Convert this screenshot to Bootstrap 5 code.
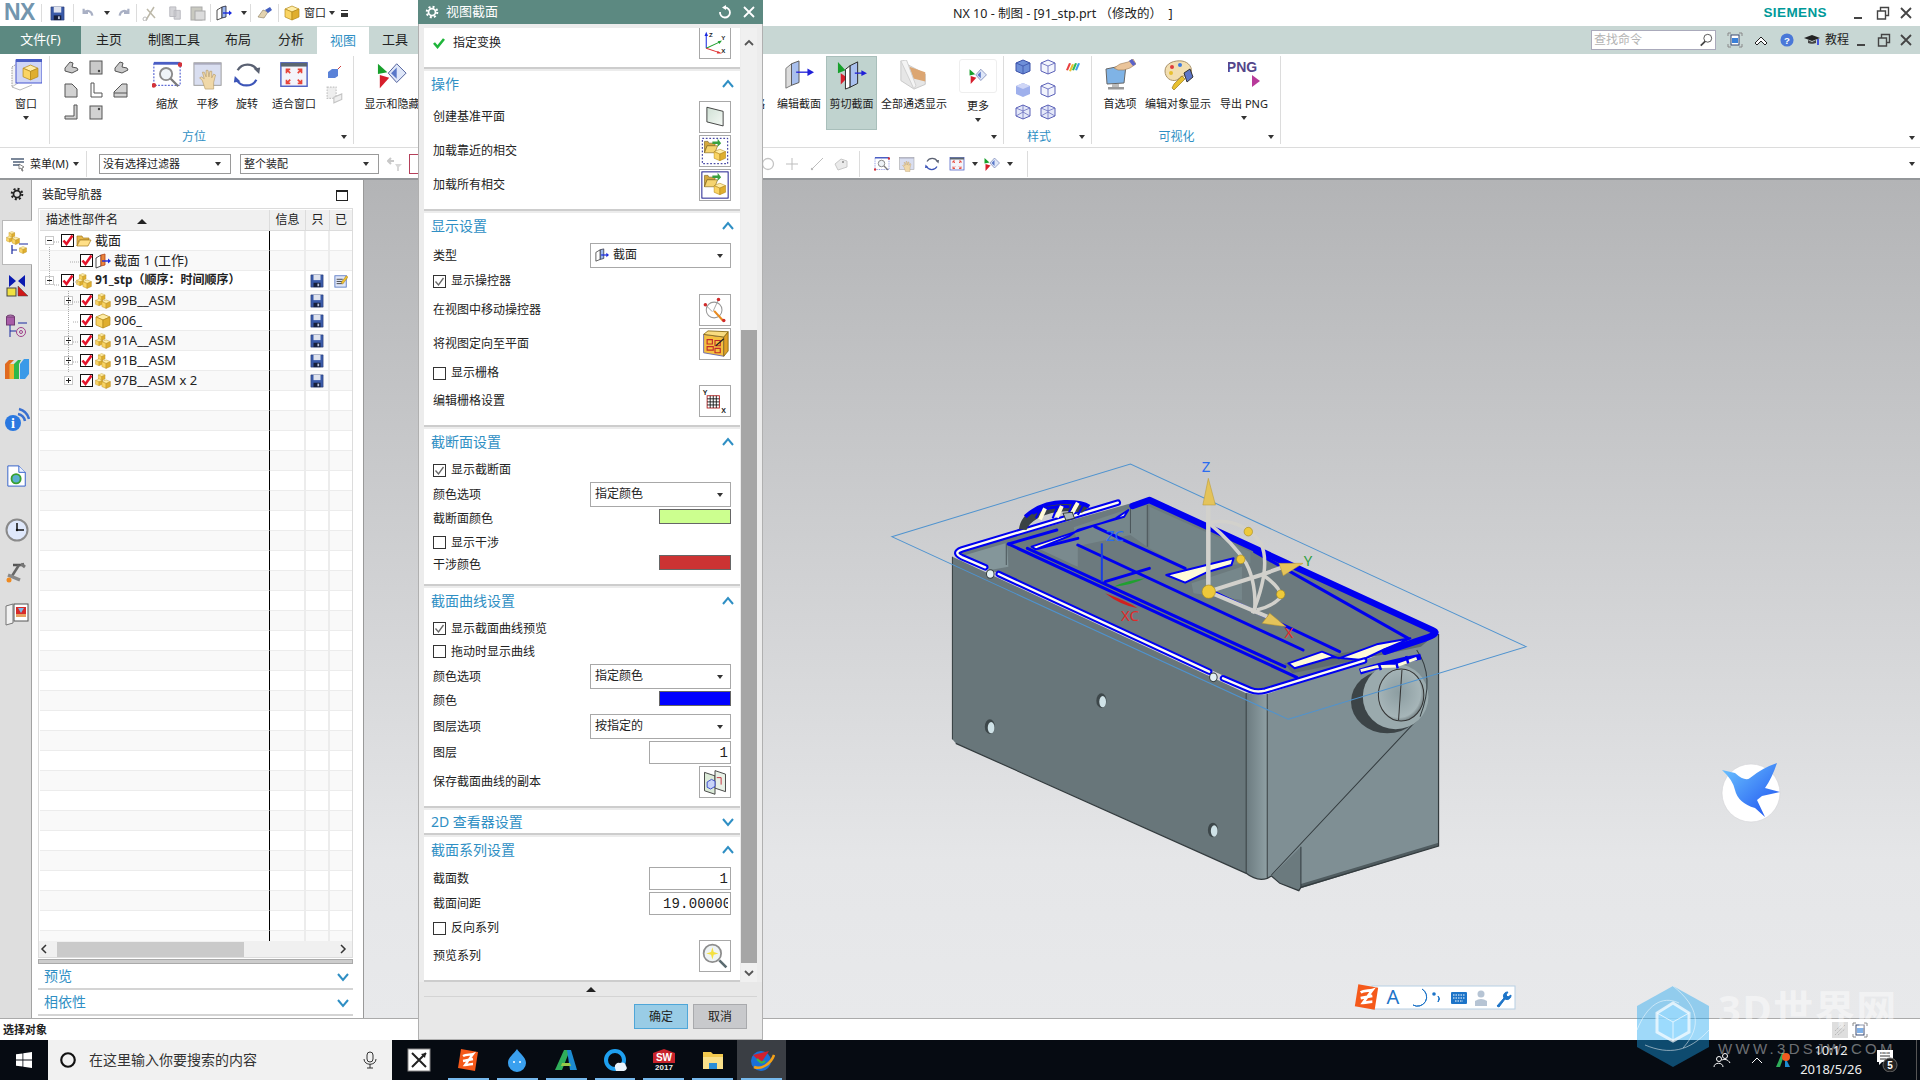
<!DOCTYPE html>
<html lang="zh-CN">
<head>
<meta charset="utf-8">
<title>NX 10 - 制图</title>
<link href="https://cdn.jsdelivr.net/npm/bootstrap@5.3.0/dist/css/bootstrap.min.css" rel="stylesheet">
<style>
html,body{margin:0;width:1920px;height:1080px;overflow:hidden;background:#fff}
body{font-family:"Noto Sans","Noto Sans CJK SC",sans-serif;font-size:12px;line-height:1.2;color:#222}
.sprite{position:absolute;width:0;height:0;overflow:hidden}
.app{position:relative;width:1920px;height:1080px;overflow:hidden}
.wd2{width:2px}.wd6{width:6px}.wd8{width:8px}.wd10{width:10px}.wd11{width:11px}.wd12{width:12px}.wd13{width:13px}.wd14{width:14px}.wd16{width:16px}.wd18{width:18px}.wd20{width:20px}.wd21{width:21px}.wd22{width:22px}.wd23{width:23px}.wd24{width:24px}.wd25{width:25px}.wd26{width:26px}.wd27{width:27px}.wd28{width:28px}.wd30{width:30px}.wd31{width:31px}.wd32{width:32px}.wd34{width:34px}.wd36{width:36px}.wd38{width:38px}.wd40{width:40px}.wd41{width:41px}.wd42{width:42px}.wd44{width:44px}.wd48{width:48px}.wd51{width:51px}.wd52{width:52px}.wd54{width:54px}.wd56{width:56px}.wd60{width:60px}.wd64{width:64px}.wd68{width:68px}.wd74{width:74px}.wd78{width:78px}.wd230{width:230px}.wd311{width:311px}.wd330{width:330px}
.slot{display:flex;align-items:center;justify-content:center;flex:none;height:100%}
.s10{width:10px;height:10px}.s12{width:12px;height:12px}.s13{width:13px;height:13px}.s14{width:14px;height:14px}.s15{width:15px;height:15px}.s16{width:16px;height:16px}.s18{width:18px;height:18px}.s20{width:20px;height:20px}.s22{width:22px;height:22px}.s24{width:24px;height:24px}.s26{width:26px;height:26px}.s28{width:28px;height:28px}.s30{width:30px;height:30px}.s32{width:32px;height:32px}
.car{display:inline-block;width:0;height:0;border-left:3.5px solid transparent;border-right:3.5px solid transparent;border-top:4px solid #333}
/* title */
.tbar{height:26px;background:#fff}
.nxlogo{font-family:"Liberation Sans",sans-serif;font-weight:700;font-size:23px;color:#7295ae;letter-spacing:-.5px;padding-left:4px;justify-content:flex-start}
.qsep{width:1px;height:18px;background:#dcdcdc;flex:none}
.ttl{margin-left:603px;font-size:12.5px;white-space:pre;color:#222}
.siemens{font-family:"Liberation Sans",sans-serif;font-weight:700;font-size:13.5px;letter-spacing:.4px;color:#009999}
.lbl11{font-size:11px}
.ovf{display:flex;flex-direction:column;align-items:center;gap:2px}
.ovf i{display:block;width:7px;height:1px;background:#333}
/* tabs */
.tabsrow{height:28px;background:#c8d7d4}
.tabsrow .nav-link{padding:0;height:28px;display:flex;align-items:center;justify-content:center;color:#222;font-size:13px}
.tabsrow .filetab{width:81px;background:#5c8981;color:#fff}
.tabsrow .acttab{background:#fff;color:#2f8fc4;border-top:1px solid #d4dedc}
.srch{width:125px;height:20px;margin-right:7px;background:#fff;border:1px solid #aab;display:flex;align-items:center;justify-content:space-between;padding:0 2px;color:#b3b3b3}
.tut{font-size:12px;color:#222;white-space:nowrap}
/* ribbon */
.ribbon{height:94px;background:#fff;border-bottom:1px solid #dcdcdc;padding-top:2px}
.rgrp{display:flex;flex-direction:column;flex:none;height:88px;border-right:1px solid #dcdcdc}
.rg1{width:50px;padding-left:4px}.rg2{width:304px;padding-left:8px}.rg3{width:650px;padding-left:8px}.rg4{width:88px;padding-left:6px}.rg5{width:189px;padding-left:4px}
.rtop{display:flex;height:75px}
.rbt{display:flex;flex-direction:column;align-items:center;padding-top:3px;flex:none;height:74px;white-space:nowrap;font-size:11px}
.rbt .ric{height:32px;display:flex;align-items:center;justify-content:center}
.rbt span{margin-top:5px;line-height:15px}
.rbt .car{margin-top:5px}
.rbt.on{background:#c0d3cf;border:1px solid #a9bfbb;padding-top:2px}
.morebox{width:38px;height:34px;border:1px solid #eee;border-radius:3px;display:flex;align-items:center;justify-content:center}
.rfoot{display:flex;align-items:center;height:14px;color:#2f8fc4;font-size:12px}
.rfoot b{font-weight:400;flex:1;text-align:center;padding-right:5px}
.rfoot div{width:18px;display:flex;justify-content:center}
.sgrid{display:grid;grid-template-columns:repeat(3,25px);grid-auto-rows:22.5px;justify-items:center;align-items:center}
.mr14{margin-right:14px}.ml3{margin-left:3px}.ml8{margin-left:8px}
.rcol{display:flex;flex-direction:column;align-items:center;padding-top:2px;gap:6px}
.fcar{height:88px}
/* toolbar */
.tool2{height:32px;background:#fff;border-bottom:2px solid #94979a;padding-top:1px}
.menuz{width:87px;height:26px;border-right:1px solid #dcdcdc;padding-left:10px;gap:4px;font-size:11px;flex:none}
.tsel{height:20px;background:#fff;border:1px solid #9a9a9a;font-size:11px;display:flex;align-items:center;justify-content:space-between;padding:0 9px 0 3px;flex:none}
.ts1{width:132px;margin-left:12px}.ts2{width:139px;margin-left:9px}
.vdiv{width:1px;height:26px;background:#dcdcdc;flex:none}
.redb{width:16px;height:20px;border:1px solid #b5405a;margin-left:6px;flex:none}
/* main */
.mainz{height:838px}
.rail{width:32px;background:#dedede;border-right:1px solid #a3a3a3;flex:none;position:relative}
.rl{display:flex;align-items:center;justify-content:center;width:31px;flex:none;padding-left:2px}
.rl-gear{height:40px;padding-bottom:13px}.rl-act{height:45px;background:#fff;margin-left:2px;width:30px;border:1px solid #b9b9b9;border-right:0;position:relative;margin-right:-1px;padding-left:0}
.h40{height:40px}.h42{height:42px}.h44{height:44px}.h58{height:58px}.h54{height:54px}.h30{height:30px}
.pane{width:332px;background:#fff;border-right:1px solid #999;padding:0 9px 0 6px;flex:none}
.ptitle{height:28px;padding:2px 6px 0 4px;font-size:12px}
.maxb{width:12px;height:11px;border:1px solid #222;border-top-width:2px;display:block}
.twrap{position:relative;height:733px;width:315px;border:1px solid #dcdcdc;border-bottom:0;padding:1px 0 0 1px;overflow:hidden;background:#fff}
.navt{border-collapse:separate;border-spacing:0;table-layout:fixed;width:312px;font-size:12px}
.navt th{height:21px;background:#f0f0f0;font-weight:400;border-right:1px solid #dcdcdc;border-bottom:1px solid #dcdcdc;text-align:center;padding:1px 0 0;white-space:nowrap}
.navt th:first-child{text-align:left;padding-left:6px}
.navt th:last-child,.navt td:last-child{border-right:0}
.navt td{height:20px;padding:0;border-right:2px solid #ececec;border-bottom:1px solid #ececec;text-align:center;overflow:hidden}
.navt td:first-child{border-right:1px solid #000;text-align:left}
.navt tr:nth-child(even) td{background:#f9f9f9}
.sorta{display:inline-block;margin-left:19px;width:0;height:0;border-left:5px solid transparent;border-right:5px solid transparent;border-bottom:5px solid #222;vertical-align:middle}
.tn{display:flex;align-items:center;height:19px;white-space:nowrap;font-size:13px}
.tn.l0{padding-left:5px}.tn.l1{padding-left:24px}
.tbx{width:9px;height:9px;margin-right:7px;flex:none}
.tic{margin:0 3px 0 2px;flex:none}
.tn b{font-weight:700;font-size:12px}
.tlines{position:absolute;left:0;top:0;width:80px;height:180px;pointer-events:none}
.hsb{width:315px;height:17px;background:#f0f0f0;border:1px solid #dcdcdc;border-top:0;padding-right:0}
.hsb i{display:block;height:15px;width:187px;background:#cacaca;margin-left:8px;flex:none}
.sash{height:5px;width:315px;background:#ccc;border:1px solid #aaa;margin-top:1px}
.pfold{height:23px;width:306px;border-bottom:2px solid #d4d4d4;padding:1px 3px 0 6px;font-size:14px;color:#2f8fc4;box-sizing:content-box}
.canv{flex:1;position:relative;background:linear-gradient(#b3b4b6 0,#e5e6e8 680px,#e8e9eb 100%)}
.canvsvg{position:absolute;left:0;top:0;width:1557px;height:838px}
.mdl *{vector-effect:non-scaling-stroke}
.statusb{height:22px;background:#fff;border-top:1px solid #aaa;font-size:11px;font-weight:700;padding:0 52px 0 3px}
.taskb{height:40px;background:#060b12;color:#fff;position:relative}
.startb{width:48px}
.tsearch{width:344px;height:40px;background:#f1f1f1;color:#333;font-size:14px;padding:0 13px 0 11px;flex:none}
.tsearch .cort{margin-right:12px}
.tk{width:48.9px;height:40px;display:flex;align-items:center;justify-content:center;flex:none;position:relative}
.tk.run::after{content:"";position:absolute;left:4px;right:4px;bottom:0;height:2px;background:#76b9ed}
.tk.cur{background:#3a3e44}
.tspc{margin-left:3px}
.tclock{font-size:13px;line-height:19px;text-align:center;flex-direction:column;color:#eee}
.tline{width:1px;height:40px;background:#555;margin-left:14px;margin-right:3px}
/* dialog */
.dlg{position:absolute;left:418px;top:0;width:345px;height:1040px;background:#e8e8e8;border:1px solid #b0b0b0;border-top:0;z-index:5;display:flex;flex-direction:column}
.dhead{height:24px;background:#5c8981;color:#fff;font-size:13px;padding:0 7px 0 7px;flex:none;margin:0 -1px;gap:7px}
.dbody{height:958px;padding:4px 4px 0 5px;gap:1px;background:#ececec;flex:none}
.dsecs{width:316px;flex:none}
.dsec{background:#fff;border-bottom:2px solid #cdcdcd;margin-bottom:2px;padding:0 9px;box-sizing:content-box}
.dshd{height:30px;padding-bottom:4px;font-size:14px;color:#2f8fc4;margin-left:-2px}
.dshd.cl{height:23px;padding-bottom:0;padding-top:1px}
.dshd svg{margin-right:-4px}
.drw{display:flex;align-items:center;justify-content:space-between;font-size:12px}
.ln25{line-height:26px}.ln23{line-height:24px}
.rh34{height:34px;padding-bottom:2px}.rh26{height:26px;align-items:flex-start}.rh27{height:27px;align-items:flex-start}.rh25{height:25px}.rh23{height:23px}.rh22{height:22px}.rh24{height:24px}
.rsw{height:23px;align-items:flex-start;line-height:20px}.rsw2{height:22px;align-items:flex-start;line-height:20px}
.rhin{height:25px;align-items:flex-start}
.pb6{padding-bottom:6px}.pb7{padding-bottom:7px}.pb9{padding-bottom:9px}
.ib{width:32px;height:32px;border:1px solid #a8a8a8;background:#fff;display:flex;align-items:center;justify-content:center;flex:none;padding:0;border-radius:0}
.ib.cut{height:31px;border-top:0}
.dselx{width:141px;height:25px;border:1px solid #a8a8a8;background:#fff;display:flex;align-items:center;padding:0 7px 0 4px;justify-content:space-between;flex:none}
.swx{width:72px;height:15px;border:1px solid #666;flex:none}
.sw-g{background:#ccff8f}.sw-r{background:#cc3333}.sw-b{background:#0000ff}
.dchk{display:flex;align-items:center;gap:5px;margin:0;font-size:12px}
.dchk .form-check-input{width:13px;height:13px;margin:0;border:1px solid #333;border-radius:0;background-color:#fff;box-shadow:none;float:none}
.dchk .form-check-input:checked{background-color:#fff;border-color:#333;background-image:url("data:image/svg+xml,%3csvg xmlns='http://www.w3.org/2000/svg' viewBox='0 0 13 13'%3e%3cpath fill='none' stroke='%23666' stroke-width='1.3' d='M2.5 6.5l3 3.5 5-7'/%3e%3c/svg%3e");background-size:13px 13px}
.numi{width:82px;height:23px;border:1px solid #a8a8a8;border-radius:0;padding:0 2px;text-align:right;font-family:"Liberation Mono",monospace;font-size:14px;background:#fff;color:#222;box-shadow:none}
.numc{text-align:left;padding-left:13px;letter-spacing:.15px}
.dscr{width:16px;height:954px;background:#f0f0f0;flex:none}
.dscr .up{height:30px}.dscr .thumb{height:633px;background:#a6a6a6;margin-top:272px}.dscr .dn{height:19px}
.dcoll{height:14px;margin-top:0;flex:none}
.dfoot{border-top:1px solid #d4d4d4;height:42px;padding:7px 10px 0 0;flex:none;gap:5px;margin:0 5px}
.dbtn{width:54px;height:25px;padding:0;border-radius:0;font-size:12px;color:#222}
.dbtn.ok{background:#99cce6;border:1px solid #4fa6d8}
.dbtn.no{background:#c8c9cc;border:1px solid #a9aaad}
.wmk{position:absolute;left:1630px;top:980px;width:290px;height:100px;z-index:6;pointer-events:none}
.canvtxt{font-family:"Noto Sans",sans-serif}
</style>
</head>
<body>
<svg class="sprite" xmlns="http://www.w3.org/2000/svg">
<defs>
<linearGradient id="gPlane" x1="0" y1="0" x2="1" y2="1"><stop offset="0" stop-color="#cfe0d4"/><stop offset="1" stop-color="#f5f9f5"/></linearGradient>
<linearGradient id="gStrip" x1="0" y1="0" x2="1" y2="0"><stop offset="0" stop-color="#6c7b80"/><stop offset="1" stop-color="#8fa0a4"/></linearGradient>
<linearGradient id="gBird" x1="0" y1="0" x2="1" y2="1"><stop offset="0" stop-color="#6fc8ff"/><stop offset="1" stop-color="#1a4df0"/></linearGradient>
<radialGradient id="gWheel" cx=".45" cy=".45" r=".6"><stop offset="0" stop-color="#8c9da1"/><stop offset=".8" stop-color="#a6b5b8"/><stop offset="1" stop-color="#5e6a6d"/></radialGradient>
<symbol id="cube" viewBox="0 0 16 16"><polygon points="8,1 15,4 8,7 1,4" fill="#ffeda6" stroke="#b58a1a" stroke-width=".7"/><polygon points="1,4 8,7 8,15 1,12" fill="#fad463" stroke="#b58a1a" stroke-width=".7"/><polygon points="15,4 8,7 8,15 15,12" fill="#dfae2f" stroke="#b58a1a" stroke-width=".7"/></symbol>
<symbol id="asm" viewBox="0 0 18 18"><use href="#cube" x="3" y="0" width="9" height="9"/><use href="#cube" x="0" y="6" width="9" height="9"/><use href="#cube" x="7" y="7" width="11" height="11"/></symbol>
<symbol id="chk" viewBox="0 0 13 13"><rect x=".5" y=".5" width="12" height="12" fill="#fff" stroke="#111"/><path d="M2.5 6.5L5.5 10L11.5 1.5" fill="none" stroke="#e3132b" stroke-width="2.6"/></symbol>
<symbol id="save" viewBox="0 0 16 16"><path d="M1 1h14v14H1z" fill="#3a5aa8" stroke="#27386e" stroke-width=".6"/><rect x="4" y="1" width="8" height="6" fill="#dfe3ee"/><rect x="4" y="10" width="8" height="5" fill="#161f3c"/><rect x="8.5" y="11" width="2" height="3" fill="#b9c2da"/></symbol>
<symbol id="fopen" viewBox="0 0 16 16"><path d="M1 3h5l1 2h6v2H3L1 13z" fill="#e6b84a" stroke="#a5781b" stroke-width=".7"/><path d="M1 13l3-6h11l-3 6z" fill="#ffdf86" stroke="#a5781b" stroke-width=".7"/></symbol>
<symbol id="sect" viewBox="0 0 16 16"><polygon points="1,5 6,2 6,13 1,15" fill="#fff" stroke="#222" stroke-width=".8"/><polygon points="6,2 10,1 10,12 6,13" fill="#e9853a" stroke="#b5401a" stroke-width=".8"/><path d="M7 8h7" stroke="#1a2ae0" stroke-width="1.4"/><path d="M16 8l-3-2.5v5z" fill="#1a2ae0"/></symbol>
<symbol id="bsect" viewBox="0 0 16 16"><polygon points="1,5 6,2 6,13 1,15" fill="#fff" stroke="#222" stroke-width=".8"/><polygon points="6,2 10,1 10,12 6,13" fill="#9db8ee" stroke="#223" stroke-width=".8"/><path d="M7 8h7" stroke="#1a2ae0" stroke-width="1.4"/><path d="M16 8l-3-2.5v5z" fill="#1a2ae0"/></symbol>
<symbol id="note" viewBox="0 0 16 16"><rect x="1" y="2" width="13" height="13" fill="#dfe6f8" stroke="#5a7ac4"/><path d="M3 6h7M3 8.500h6M3 11h6" stroke="#333"/><path d="M8 10l6-8 2 1.500-6 8z" fill="#f2c230" stroke="#8a6a10" stroke-width=".5"/></symbol>
<symbol id="gear" viewBox="0 0 16 16"><circle cx="8" cy="8" r="4" fill="none" stroke="currentColor" stroke-width="2"/><circle cx="8" cy="8" r="6" fill="none" stroke="currentColor" stroke-width="2.400" stroke-dasharray="2.300 2.400"/></symbol>
<symbol id="rzoom" viewBox="0 0 32 32"><rect x="2" y="3" width="28" height="24" fill="#fff" stroke="#2c3ec8" stroke-dasharray="2 1.500"/><rect x="2" y="2" width="28" height="3" fill="#4a5ec4"/><circle cx="15" cy="15" r="6.500" fill="#eef3f7" stroke="#8b8b8b" stroke-width="2"/><path d="M20 20l8 8" stroke="#7a7a7a" stroke-width="2.500"/><circle cx="30" cy="5" r="2.500" fill="#d3333a"/><circle cx="2" cy="27" r="2.500" fill="#d3333a"/></symbol>
<symbol id="rpan" viewBox="0 0 32 32"><rect x="1" y="3" width="29" height="24" fill="#d9def0" stroke="#9a9a9a"/><rect x="1" y="3" width="29" height="2" fill="#aab"/><path d="M13 31l-3-9-3-3 2-1 3 2-2-7 2 0 2 5-0-7 2 0 1 7 1-6 2 0 0 7 2-4 2 1-2 8 0 7z" fill="#f0d8a8" stroke="#b79b6a" stroke-width=".7"/></symbol>
<symbol id="rrot" viewBox="0 0 32 32"><path d="M6 11A12 12 0 0 1 27 11" fill="none" stroke="#5a6172" stroke-width="2.400"/><path d="M26 21A12 12 0 0 1 5 21" fill="none" stroke="#3c55b8" stroke-width="2.400"/><path d="M23 9l7-1-1 7z" fill="#5a6172"/><path d="M9 23l-7 1 1-7z" fill="#3c55b8"/></symbol>
<symbol id="rfit" viewBox="0 0 32 32"><rect x="2" y="3" width="28" height="25" fill="#f4f4fa" stroke="#4a5ec4" stroke-width="1.500"/><rect x="2" y="3" width="28" height="4" fill="#5b6670"/><g fill="none" stroke="#e8453a" stroke-width="1.800"><path d="M8 10l4 4M8 14v-4h4M24 10l-4 4M24 14v-4h-4M8 25l4-4M8 21v4h4M24 25l-4-4M24 21v4h-4"/></g></symbol>
<symbol id="rwin" viewBox="0 0 32 32"><path d="M2 8l6-4v20l-6 4z" fill="#f4f4f4" stroke="#999" stroke-dasharray="1.500 1"/><rect x="6" y="1" width="26" height="23" fill="#cfd6f6" stroke="#4455d0"/><rect x="6" y="0" width="26" height="3" fill="#4a5ec4"/><use href="#cube" x="11" y="5" width="19" height="17"/><path d="M2 28l8 3 12-5" fill="none" stroke="#bbb"/></symbol>
<symbol id="rshow" viewBox="0 0 32 32"><polygon points="1,4 11,13 1,15" fill="#18a02c"/><polygon points="3,16 13,19 3,30" fill="#d61f2c"/><polygon points="21,4 31,14 21,24 12,14" fill="#dfe7f8" stroke="#4a5a98"/><polygon points="21,8 21,20 15,14" fill="#5a78c8"/></symbol>
<symbol id="redit" viewBox="0 0 32 32"><polygon points="2,9 8,4 8,27 2,30" fill="#dcdcdc" stroke="#777"/><polygon points="8,4 16,1 16,24 8,27" fill="#a9c0ee" stroke="#555"/><path d="M13 13h13" stroke="#2020d8" stroke-width="1.400"/><path d="M32 13l-7-4v8z" fill="#2020d8"/></symbol>
<symbol id="rclip" viewBox="0 0 32 32"><polygon points="1,2 9,11 1,14" fill="#18a02c"/><polygon points="4,14 11,19 4,26" fill="#d61f2c"/><polygon points="9,10 14,6 14,29 9,31" fill="#fff" stroke="#222"/><polygon points="14,6 22,2 22,25 14,29" fill="#a9c0ee" stroke="#222"/><path d="M19 14h8" stroke="#2020d8" stroke-width="1.400"/><path d="M32 14l-6-3v6z" fill="#2020d8"/></symbol>
<symbol id="rtrans" viewBox="0 0 32 32"><polygon points="2,1 28,15 28,26 16,31 2,22" fill="#e6e6e6" stroke="#c8c8c8"/><polygon points="8,6 28,13 28,23 12,19" fill="#dca672"/><polygon points="2,1 8,0 18,27 16,31" fill="#f4f4f4" stroke="#cfcfcf"/></symbol>
<symbol id="rpref" viewBox="0 0 32 32"><polygon points="2,10 22,6 20,24 3,25" fill="#7fb3e6" stroke="#666"/><rect x="8" y="25" width="7" height="3" fill="#bbb"/><rect x="4" y="28" width="16" height="2.500" fill="#999"/><path d="M10 9l6-4 8-2 5-3 3 5-6 4-6 2-6 0z" fill="#eac49a" stroke="#9c7a52" stroke-width=".6"/><path d="M28 0l4 5-3 2-4-5z" fill="#5a62c8"/></symbol>
<symbol id="rpal" viewBox="0 0 32 32"><path d="M3 12C3 4 13 1 20 2c7 1 11 7 9 13-1 3-5 2-8 2s-4 3-6 4C9 23 3 19 3 12z" fill="#f2deb0" stroke="#a9926a"/><circle cx="10" cy="8" r="2" fill="#e03c3c"/><circle cx="18" cy="6" r="2" fill="#3c7ae0"/><circle cx="9" cy="14" r="2" fill="#e8c030"/><polygon points="22,14 28,10 31,18 25,23" fill="#5e76c8" stroke="#333"/><path d="M12 25l8-8 3 3-8 8-3 3-2-2z" fill="#e8c030" stroke="#8a6a10" stroke-width=".6"/></symbol>
<symbol id="cubeb" viewBox="0 0 16 16"><polygon points="8,1 15,4 15,12 8,15 1,12 1,4" fill="#6e8fd8" stroke="#3a50a8"/><path d="M1 4l7 3 7-3M8 7v8" fill="none" stroke="#3a50a8" stroke-width=".8"/></symbol>
<symbol id="cubew" viewBox="0 0 16 16"><polygon points="8,1 15,4 15,12 8,15 1,12 1,4" fill="#f2f4fc" stroke="#5a60b8"/><path d="M1 4l7 3 7-3M8 7v8" fill="none" stroke="#5a60b8" stroke-width=".8"/></symbol>
<symbol id="cubes" viewBox="0 0 16 16"><polygon points="8,1 15,4 15,12 8,15 1,12 1,4" fill="#9fb0ec"/><polygon points="8,1 15,4 8,7 1,4" fill="#cfd6f6"/></symbol>
<symbol id="cubex" viewBox="0 0 16 16"><polygon points="8,1 15,4 15,12 8,15 1,12 1,4" fill="#e4e8f8" stroke="#5a60b8"/><path d="M1 4l7 3 7-3M8 7v8M1 12l7-4 7 4M8 1v6" fill="none" stroke="#5a60b8" stroke-width=".7"/></symbol>
<symbol id="rbow" viewBox="0 0 16 16"><path d="M1 11l3-7 2 .5-3 7z" fill="#e84040"/><path d="M4 12l3-7 2 .5-3 7z" fill="#e8c030"/><path d="M7 11l3-7 2 .5-3 7z" fill="#30b850"/><path d="M10 11l3-7 2 .5-3 7z" fill="#3aa0e8"/></symbol>
<symbol id="v1" viewBox="0 0 16 16"><path d="M2 9l5-6 3 1-1 4 5 1 1 2-6 3-7-2z" fill="#c9c9c9" stroke="#555"/></symbol>
<symbol id="v2" viewBox="0 0 16 16"><rect x="2" y="2" width="12" height="13" fill="#c9c9c9" stroke="#555"/><circle cx="11" cy="12" r="1.200" fill="#444"/></symbol>
<symbol id="v3" viewBox="0 0 16 16"><path d="M2 2h7l5 5v8H2z" fill="#d2d2d2" stroke="#555"/></symbol>
<symbol id="v4" viewBox="0 0 16 16"><path d="M3 1h3v10h8v4H3z" fill="#fff" stroke="#555"/></symbol>
<symbol id="v5" viewBox="0 0 16 16"><path d="M1 15V10l8-8h5v13z" fill="#d2d2d2" stroke="#555"/><path d="M1 11h13" stroke="#555"/></symbol>
<symbol id="v6" viewBox="0 0 16 16"><path d="M11 1h3v14H2v-3h9z" fill="#d2d2d2" stroke="#555"/></symbol>
<symbol id="v7" viewBox="0 0 16 16"><rect x="2" y="2" width="12" height="13" fill="#d2d2d2" stroke="#555"/><circle cx="11" cy="5" r="1.200" fill="#444"/></symbol>
<symbol id="caxis" viewBox="0 0 32 32"><path d="M6 22V7" stroke="#1a2ae0" stroke-width="1.200"/><path d="M6 3l-2 5h4z" fill="#1a2ae0"/><path d="M6 22l15-7" stroke="#20a030" stroke-width="1.200"/><path d="M24 13l-5 1 2 3z" fill="#20a030"/><path d="M6 22l15 5" stroke="#e03030" stroke-width="1.200"/><path d="M24 28l-5-3-1 3z" fill="#e03030"/><text x="9" y="9" font-size="7" font-weight="700" font-family="Liberation Sans" fill="#222">Z</text><text x="23" y="13" font-size="7" font-weight="700" font-family="Liberation Sans" fill="#222">Y</text><text x="23" y="27" font-size="7" font-weight="700" font-family="Liberation Sans" fill="#222">X</text></symbol>
<symbol id="dplane" viewBox="0 0 32 32"><polygon points="6,4 26,9 26,27 6,22" fill="url(#gPlane)" stroke="#222"/></symbol>
<symbol id="dfold" viewBox="0 0 32 32"><path d="M4 5h4l1 2h7v3H7L4 18z" fill="#d4a83e" stroke="#7c5f16" stroke-width=".7"/><path d="M4 18l3-8h12l-3 8z" fill="#f5d470" stroke="#7c5f16" stroke-width=".7"/><path d="M13 5h6v-3l4 5-4 4V8h-6z" fill="#38a040"/><use href="#cube" x="14" y="13" width="15" height="15"/></symbol>
<symbol id="dmanip" viewBox="0 0 32 32"><circle cx="15" cy="16" r="9" fill="none" stroke="#999" stroke-width="1.200"/><path d="M5 10l8 8M20 4L14 17" stroke="#999"/><path d="M15 17l10 11" stroke="#e88a20" stroke-width="2.500"/><circle cx="5" cy="10" r="2" fill="#d02a2a"/><circle cx="20" cy="4" r="2" fill="#d02a2a"/><circle cx="26" cy="28" r="2" fill="#d02a2a"/></symbol>
<symbol id="dorient" viewBox="0 0 32 32"><polygon points="3,5 26,8 26,30 3,26" fill="#f4c040" stroke="#6060b0"/><polygon points="26,8 31,2 31,24 26,30" fill="#e0a028" stroke="#8a6a10"/><polygon points="3,5 8,1 31,2 26,8" fill="#f9dc80" stroke="#8a6a10"/><path d="M7 11h6v5H7zM16 12h6v6h-6zM7 19h7v4H7zM16 21h6v5h-6z" fill="none" stroke="#c02a2a" stroke-width="1.300"/><path d="M17 18l9-8" stroke="#222" stroke-width="1.500"/></symbol>
<symbol id="dgrid" viewBox="0 0 32 32"><text x="2" y="9" font-size="8" font-weight="700" font-family="Liberation Sans" fill="#222">Y</text><rect x="7" y="10" width="14" height="14" fill="#fff" stroke="#b01818"/><path d="M7 13.500h14M7 17h14M7 20.500h14M10.500 10v14M14 10v14M17.500 10v14" stroke="#111"/><text x="23" y="30" font-size="8" font-weight="700" font-family="Liberation Sans" fill="#222">X</text></symbol>
<symbol id="dcopy" viewBox="0 0 32 32"><polygon points="4,5 16,9 16,30 4,26" fill="#dcebd9" stroke="#333"/><polygon points="16,3 28,7 28,27 16,23" fill="#e8f0e6" stroke="#333"/><path d="M7 16l5-3 4 2v6l-5 3-4-2z" fill="#c8d4f8" stroke="#3040c8"/><path d="M18 11h5v8" fill="none" stroke="#c02030"/></symbol>
<symbol id="dprev" viewBox="0 0 32 32"><circle cx="13" cy="13" r="10" fill="#eef3f4" stroke="#8d8d8d" stroke-width="2"/><path d="M13 6l1.500 5.500L20 13l-5.500 1.500L13 20l-1.500-5.500L6 13l5.500-1.500z" fill="#f4e040"/><path d="M21 21l8 8" stroke="#5b6b70" stroke-width="3"/></symbol>
<symbol id="chvU" viewBox="0 0 14 10"><path d="M2 8l5-6 5 6" fill="none" stroke="#2f8fc4" stroke-width="2"/></symbol>
<symbol id="chvD" viewBox="0 0 14 10"><path d="M2 2l5 6 5-6" fill="none" stroke="#2f8fc4" stroke-width="2"/></symbol>
<symbol id="mini" viewBox="0 0 14 14"><rect x="2" y="11" width="8" height="2" fill="#444"/></symbol>
<symbol id="rest" viewBox="0 0 14 14"><path d="M1.500 5h8v8h-8zM4.500 5V1.500h8v8h-3" fill="none" stroke="#444" stroke-width="1.400"/></symbol>
<symbol id="xx" viewBox="0 0 14 14"><path d="M2 2l10 10M12 2L2 12" stroke="#444" stroke-width="1.800"/></symbol>
<symbol id="zot" viewBox="0 0 24 24"><path d="M5 1l17 3-3 19L2 20z" fill="#f5591a"/><path d="M7 8c3-2 7-1 10-2l-8 11c3 0 6-1 8-1M7 13l10-2" fill="none" stroke="#fff" stroke-width="2.300"/></symbol>
</defs>
</svg>

<div class="app">
  <!-- title -->
  <div class="tbar d-flex align-items-center">
    <div class="slot nxlogo wd41">NX</div>
    <span class="qsep"></span>
    <div class="slot wd31 justify-content-start"><svg class="s15 ms-2" viewBox="0 0 16 16"><use href="#save"/></svg></div>
    <span class="qsep"></span>
    <div class="slot wd27"><svg class="s14" viewBox="0 0 16 16"><path d="M3 3v5h5M3 8c3-4 9-3 10 3" fill="none" stroke="#a9b0c4" stroke-width="2.500"/></svg></div>
    <div class="slot wd11"><i class="car"></i></div>
    <div class="slot wd24"><svg class="s14" viewBox="0 0 16 16"><path d="M13 3v5H8M13 8c-3-4-9-3-10 3" fill="none" stroke="#a9b0c4" stroke-width="2.500"/></svg></div>
    <span class="qsep"></span>
    <div class="slot wd26"><svg class="s16" viewBox="0 0 16 16"><path d="M4 15L12 2M13 13L5 4" stroke="#bcb8a8" stroke-width="1.500"/><circle cx="3" cy="14" r="2" fill="none" stroke="#bbb"/></svg></div>
    <div class="slot wd23"><svg class="s14" viewBox="0 0 16 16"><path d="M2 1h7v11H2zM7 5h7v10H7z" fill="#d4d4d8" stroke="#b6b6bc"/></svg></div>
    <div class="slot wd24"><svg class="s16" viewBox="0 0 16 16"><rect x="1" y="2" width="11" height="13" fill="#c9c9c0" stroke="#aaa"/><rect x="5" y="6" width="10" height="9" fill="#dcdcdc" stroke="#aaa"/></svg></div>
    <span class="qsep"></span>
    <div class="slot wd26"><svg class="s16" viewBox="0 0 16 16"><use href="#bsect"/></svg></div>
    <div class="slot wd13"><i class="car"></i></div>
    <span class="qsep"></span>
    <div class="slot wd27"><svg class="s16" viewBox="0 0 16 16"><path d="M1 12l5-7 5 2-4 6z" fill="#e3d3b0" stroke="#8a7a5a" stroke-width=".6"/><path d="M8 5l5-3 2 3-4 3z" fill="#4560c0"/></svg></div>
    <span class="qsep"></span>
    <div class="slot wd25"><svg class="s16" viewBox="0 0 16 16"><use href="#cube"/></svg></div>
    <div class="slot wd22 lbl11">窗口</div>
    <div class="slot wd12"><i class="car"></i></div>
    <div class="slot wd12"><span class="ovf"><i></i><i class="car"></i></span></div>
    <div class="ttl">NX 10 - 制图 - [91_stp.prt （修改的）  ]</div>
    <div class="siemens ms-auto">SIEMENS</div>
    <div class="wd20"></div>
    <div class="slot wd24"><svg class="s14"><use href="#mini"/></svg></div>
    <div class="slot wd23"><svg class="s14"><use href="#rest"/></svg></div>
    <div class="slot wd24"><svg class="s14"><use href="#xx"/></svg></div>
    <div class="wd2"></div>
  </div>
  <!-- tabs -->
  <div class="tabsrow d-flex align-items-center">
    <ul class="nav flex-nowrap">
      <li class="nav-item"><a class="nav-link filetab" href="#">文件(F)</a></li>
      <li class="nav-item"><a class="nav-link wd56" href="#">主页</a></li>
      <li class="nav-item"><a class="nav-link wd74" href="#">制图工具</a></li>
      <li class="nav-item"><a class="nav-link wd54" href="#">布局</a></li>
      <li class="nav-item"><a class="nav-link wd52" href="#">分析</a></li>
      <li class="nav-item"><a class="nav-link wd52 acttab" href="#">视图</a></li>
      <li class="nav-item"><a class="nav-link wd52" href="#">工具</a></li>
    </ul>
    <div class="srch ms-auto"><span>查找命令</span><svg class="s14" viewBox="0 0 16 16"><circle cx="10" cy="6" r="4.500" fill="#fff" stroke="#444"/><path d="M7 9.500l-5 5" stroke="#444" stroke-width="2"/></svg></div>
    <div class="slot wd24"><svg class="s16" viewBox="0 0 16 16"><path d="M1 4V1h3M12 1h3v3M15 12v3h-3M4 15H1v-3" fill="none" stroke="#888"/><rect x="4" y="3" width="8" height="10" fill="#fff" stroke="#3a4a70"/><rect x="5" y="6" width="6" height="5" fill="#3a80d8"/></svg></div>
    <div class="slot wd28"><svg class="s14" viewBox="0 0 14 14"><path d="M1 10l6-6 6 6-2 2-4-4-4 4z" fill="#fff" stroke="#222"/></svg></div>
    <div class="slot wd24"><svg class="s14" viewBox="0 0 16 16"><circle cx="8" cy="8" r="7.500" fill="#4a78d8"/><text x="8" y="12" text-anchor="middle" font-size="11" font-weight="700" font-family="Liberation Sans" fill="#fff">?</text></svg></div>
    <div class="slot wd25"><svg class="s16" viewBox="0 0 16 16"><path d="M0 6l8-3 8 3-8 3z" fill="#222"/><path d="M4 8v3c2 1 6 1 8 0V8l-4 2z" fill="#444"/><path d="M14 7v6" stroke="#1a2ae0" stroke-width="1.500"/></svg></div>
    <div class="slot wd26 tut">教程</div>
    <div class="slot wd24"><svg class="s14"><use href="#mini"/></svg></div>
    <div class="slot wd20"><svg class="s14"><use href="#rest"/></svg></div>
    <div class="slot wd24"><svg class="s14"><use href="#xx"/></svg></div>
    <div class="wd2"></div>
  </div>
  <!-- ribbon -->
  <div class="ribbon d-flex">
    <div class="rgrp rg1">
      <div class="rtop"><div class="rbt wd44"><div class="ric"><svg class="s32"><use href="#rwin"/></svg></div><span>窗口</span><i class="car"></i></div></div>
    </div>
    <div class="rgrp rg2">
      <div class="rtop">
        <div class="sgrid mr14">
          <svg class="s16"><use href="#v1"/></svg><svg class="s16"><use href="#v2"/></svg><svg class="s16"><use href="#v1"/></svg>
          <svg class="s16"><use href="#v3"/></svg><svg class="s16"><use href="#v4"/></svg><svg class="s16"><use href="#v5"/></svg>
          <svg class="s16"><use href="#v6"/></svg><svg class="s16"><use href="#v7"/></svg>
        </div>
        <div class="rbt wd40"><div class="ric"><svg class="s30"><use href="#rzoom"/></svg></div><span>缩放</span></div>
        <div class="rbt wd41"><div class="ric"><svg class="s30"><use href="#rpan"/></svg></div><span>平移</span></div>
        <div class="rbt wd38"><div class="ric"><svg class="s30"><use href="#rrot"/></svg></div><span>旋转</span></div>
        <div class="rbt wd56"><div class="ric"><svg class="s30"><use href="#rfit"/></svg></div><span>适合窗口</span></div>
        <div class="rcol wd26 pt-2"><svg class="s16" viewBox="0 0 16 16"><path d="M1 8l4-3h6v7l-3 2H1z" fill="#5a82d8"/><path d="M11 5l3-3" stroke="#d04040"/></svg><svg class="s18" viewBox="0 0 16 16"><rect x="1" y="1" width="8" height="10" fill="#eee" stroke="#c4c4c4" stroke-dasharray="1.500 1"/><path d="M7 10l7-3v5l-7 3z" fill="#eee" stroke="#c4c4c4"/></svg></div>
      </div>
      <div class="rfoot"><b>方位</b><div><i class="car"></i></div></div>
    </div>
    <div class="rgrp rg3">
      <div class="rtop">
        <div class="rbt wd60"><div class="ric"><svg class="s30"><use href="#rshow"/></svg></div><span>显示和隐藏</span></div>
        <div class="wd311"></div>
        <div class="rbt wd42"><div class="ric"></div><span>策略</span></div>
        <div class="rbt wd48"><div class="ric"><svg class="s30"><use href="#redit"/></svg></div><span>编辑截面</span></div>
        <div class="rbt wd51 on ml3"><div class="ric"><svg class="s30"><use href="#rclip"/></svg></div><span>剪切截面</span></div>
        <div class="rbt wd74"><div class="ric"><svg class="s30"><use href="#rtrans"/></svg></div><span>全部通透显示</span></div>
        <div class="rbt wd38 ml8"><div class="morebox"><svg class="s18"><use href="#rshow"/></svg></div><span>更多</span><i class="car"></i></div>
      </div>
      <div class="rfoot justify-content-end"><div class="wd18 mb-0"><i class="car"></i></div></div>
    </div>
    <div class="rgrp rg4">
      <div class="rtop">
        <div class="sgrid">
          <svg class="s16"><use href="#cubeb"/></svg><svg class="s16"><use href="#cubew"/></svg><svg class="s16"><use href="#rbow"/></svg>
          <svg class="s16"><use href="#cubes"/></svg><svg class="s16"><use href="#cubew"/></svg><span></span>
          <svg class="s16"><use href="#cubex"/></svg><svg class="s16"><use href="#cubex"/></svg>
        </div>
      </div>
      <div class="rfoot"><b>样式</b><div><i class="car"></i></div></div>
    </div>
    <div class="rgrp rg5">
      <div class="rtop">
        <div class="rbt wd48"><div class="ric"><svg class="s32"><use href="#rpref"/></svg></div><span>首选项</span></div>
        <div class="rbt wd68"><div class="ric"><svg class="s32"><use href="#rpal"/></svg></div><span>编辑对象显示</span></div>
        <div class="rbt wd64"><div class="ric"><svg class="s32" viewBox="0 0 32 32"><text x="14" y="13" text-anchor="middle" font-family="Liberation Sans" font-weight="700" font-size="14" fill="#54468a">PNG</text><path d="M24 16l8 6-8 6z" fill="#b83a9a"/></svg></div><span>导出 PNG</span><i class="car"></i></div>
      </div>
      <div class="rfoot"><b>可视化</b><div><i class="car"></i></div></div>
    </div>
    <div class="ms-auto d-flex align-items-end fcar"><div class="wd16 d-flex justify-content-center pb-1"><i class="car"></i></div></div>
  </div>
  <!-- toolbar -->
  <div class="tool2 d-flex align-items-center">
    <div class="menuz d-flex align-items-center"><svg class="s16" viewBox="0 0 16 16"><path d="M1 3h13M3 6h11M3 9h7" stroke="#50627a" stroke-width="1.500"/><path d="M9 8l5 3-2 1 1 3-1 0-1-3-2 1z" fill="#fff" stroke="#555" stroke-width=".7"/></svg><span>菜单(M)</span><i class="car"></i></div>
    <div class="tsel ts1"><span>没有选择过滤器</span><i class="car"></i></div>
    <div class="tsel ts2"><span>整个装配</span><i class="car"></i></div>
    <div class="slot wd16 ms-2"><svg class="s16" viewBox="0 0 16 16"><path d="M1 5h6M4 2L1 5l3 3" fill="none" stroke="#c8c8c8" stroke-width="2"/><path d="M8 8h7l-3 3v4h-2v-4z" fill="#d8d8d8"/></svg></div>
    <div class="redb"></div>
    <div class="wd330"></div>
    <div class="slot wd25"><svg class="s14" viewBox="0 0 14 14"><circle cx="7" cy="7" r="5.500" fill="none" stroke="#c4c4c4" stroke-width="1.300"/></svg></div>
    <div class="slot wd24"><svg class="s14" viewBox="0 0 14 14"><path d="M7 1v12M1 7h12" stroke="#bdbdbd"/></svg></div>
    <div class="slot wd25"><svg class="s14" viewBox="0 0 14 14"><path d="M1 13L13 1" stroke="#bdbdbd"/><circle cx="2" cy="12" r="1.200" fill="#bbb"/></svg></div>
    <div class="slot wd24"><svg class="s16" viewBox="0 0 16 16"><path d="M2 8l6-5 6 2v6l-9 3z" fill="#eaeaea" stroke="#c8c8c8"/><circle cx="10" cy="6" r="1" fill="#888"/></svg></div>
    <div class="wd6"></div>
    <div class="vdiv"></div>
    <div class="wd10"></div>
    <div class="slot wd24"><svg class="s16"><use href="#rzoom"/></svg></div>
    <div class="slot wd25"><svg class="s16"><use href="#rpan"/></svg></div>
    <div class="slot wd25"><svg class="s16"><use href="#rrot"/></svg></div>
    <div class="slot wd26"><svg class="s16"><use href="#rfit"/></svg></div>
    <div class="slot wd10"><i class="car"></i></div>
    <div class="slot wd24"><svg class="s16"><use href="#rshow"/></svg></div>
    <div class="slot wd12"><i class="car"></i></div>
    <div class="wd11"></div>
    <div class="vdiv"></div>
    <div class="ms-auto wd16 d-flex justify-content-center"><i class="car"></i></div>
  </div>
  <!-- main -->
  <div class="mainz d-flex">
    <div class="rail d-flex flex-column">
      <div class="rl rl-gear"><svg class="s14"><use href="#gear"/></svg></div>
      <div class="rl rl-act"><svg class="s24" viewBox="0 0 24 24"><use href="#asm" width="14" height="14" x="0" y="0"/><path d="M6 14v9M6 19h5M13 13h9" stroke="#1a2aa0" stroke-width="1.200"/><use href="#cube" x="13" y="15" width="8" height="8"/></svg></div>
      <div class="rl h40"><svg class="s24" viewBox="0 0 24 24"><path d="M4 2l7 6-7 6zM20 2l-7 6 7 6z" fill="#0a1ab0"/><rect x="2" y="15" width="9" height="8" fill="#f0e040" stroke="#444"/><polygon points="13,23 13,13 23,23" fill="#d01818" stroke="#444" stroke-width=".5"/></svg></div>
      <div class="rl h42"><svg class="s24" viewBox="0 0 24 24"><ellipse cx="5.500" cy="3" rx="4" ry="2" fill="#c08ac0" stroke="#703a70"/><rect x="1.500" y="3" width="8" height="8" fill="#a85ca8" stroke="#703a70"/><path d="M5 11v12M5 17h6M13 9h9" stroke="#1a2aa0"/><circle cx="16" cy="18" r="4.500" fill="none" stroke="#a0408a"/><circle cx="16" cy="18" r="1.500" fill="none" stroke="#a0408a"/></svg></div>
      <div class="rl h44"><svg class="s24" viewBox="0 0 24 24"><polygon points="0,7 4,3 9,3 5,7 5,22 0,22" fill="#e06a20"/><polygon points="9,7 13,3 16,3 14,7 14,22 9,22" fill="#2fb84a"/><rect x="4.500" y="7" width="4.500" height="15" fill="#f0b030"/><polygon points="15,7 19,2 24,2 24,17 20,22 15,22" fill="#3a9ae8"/></svg></div>
      <div class="rl h58"><svg class="s26" viewBox="0 0 26 26"><circle cx="9" cy="16" r="8" fill="#2a78e0"/><text x="9" y="21" text-anchor="middle" font-family="Liberation Serif" font-weight="700" font-size="14" fill="#fff">i</text><path d="M14 7a9 9 0 0 1 7 7M15 2a14 14 0 0 1 10 10" fill="none" stroke="#3a70d0" stroke-width="2.500"/></svg></div>
      <div class="rl h54"><svg class="s22" viewBox="0 0 22 24"><path d="M1 1h12l7 7v15H1z" fill="#fff" stroke="#2a5ac8"/><path d="M13 1v7h7" fill="#eaf0ff" stroke="#2a5ac8"/><circle cx="10" cy="15" r="5" fill="#5ab0d0" stroke="#38a030" stroke-width="2"/></svg></div>
      <div class="rl h54"><svg class="s24" viewBox="0 0 24 24"><circle cx="12" cy="12" r="10.500" fill="#dfe8fb" stroke="#8a8a8a" stroke-width="2"/><path d="M12 5v7h7" fill="none" stroke="#111" stroke-width="1.500"/><circle cx="12" cy="12" r="1.200" fill="#111"/></svg></div>
      <div class="rl h30"><svg class="s24" viewBox="0 0 24 24"><path d="M8 5l8 0 3-1" stroke="#555" stroke-width="2.500"/><path d="M14 5L7 16" stroke="#666" stroke-width="2.500"/><path d="M16 4l4 3" stroke="#777" stroke-width="3"/><path d="M3 15l12 5" stroke="#888" stroke-width="3.500"/><circle cx="4" cy="20" r="2.500" fill="#f08a20"/></svg></div>
      <div class="rl h54"><svg class="s24" viewBox="0 0 24 24"><rect x="9" y="2" width="14" height="17" fill="#fff" stroke="#555"/><rect x="11" y="5" width="10" height="9" fill="#d82a2a"/><path d="M13 6l3 5 3-5z" fill="#7ab8e8"/><rect x="11" y="12" width="10" height="3" fill="#e8a060"/><polygon points="1,4 8,2 8,21 1,23" fill="#f2f2f2" stroke="#777"/></svg></div>
    </div>
    <div class="pane d-flex flex-column">
      <div class="ptitle d-flex align-items-center justify-content-between"><span>装配导航器</span><i class="maxb"></i></div>
      <div class="twrap">
        <table class="navt">
          <colgroup><col class="wd230"><col class="wd36"><col class="wd24"><col class="wd22"></colgroup>
          <thead><tr><th>描述性部件名<i class="sorta"></i></th><th>信息</th><th>只</th><th>已</th></tr></thead>
          <tbody>
            <tr><td><div class="tn l0"><svg class="tbx" viewBox="0 0 9 9"><rect x=".5" y=".5" width="8" height="8" fill="#fff" stroke="#c8c8c8"/><path d="M2 4.500h5" stroke="#222"/></svg><svg class="s13"><use href="#chk"/></svg><svg class="s16 tic"><use href="#fopen"/></svg>截面</div></td><td></td><td></td><td></td></tr>
            <tr><td><div class="tn l1"><span class="tbx"></span><svg class="s13"><use href="#chk"/></svg><svg class="s16 tic"><use href="#sect"/></svg>截面 1 (工作)</div></td><td></td><td></td><td></td></tr>
            <tr><td><div class="tn l0"><svg class="tbx" viewBox="0 0 9 9"><rect x=".5" y=".5" width="8" height="8" fill="#fff" stroke="#c8c8c8"/><path d="M2 4.500h5" stroke="#222"/></svg><svg class="s13"><use href="#chk"/></svg><svg class="s16 tic"><use href="#asm"/></svg><b>91_stp（顺序：时间顺序）</b></div></td><td></td><td><svg class="s14"><use href="#save"/></svg></td><td><svg class="s14"><use href="#note"/></svg></td></tr>
            <tr><td><div class="tn l1"><svg class="tbx" viewBox="0 0 9 9"><rect x=".5" y=".5" width="8" height="8" fill="#fff" stroke="#c8c8c8"/><path d="M2 4.500h5M4.500 2v5" stroke="#222"/></svg><svg class="s13"><use href="#chk"/></svg><svg class="s16 tic"><use href="#asm"/></svg>99B__ASM</div></td><td></td><td><svg class="s14"><use href="#save"/></svg></td><td></td></tr>
            <tr><td><div class="tn l1"><span class="tbx"></span><svg class="s13"><use href="#chk"/></svg><svg class="s16 tic"><use href="#cube"/></svg>906_</div></td><td></td><td><svg class="s14"><use href="#save"/></svg></td><td></td></tr>
            <tr><td><div class="tn l1"><svg class="tbx" viewBox="0 0 9 9"><rect x=".5" y=".5" width="8" height="8" fill="#fff" stroke="#c8c8c8"/><path d="M2 4.500h5M4.500 2v5" stroke="#222"/></svg><svg class="s13"><use href="#chk"/></svg><svg class="s16 tic"><use href="#asm"/></svg>91A__ASM</div></td><td></td><td><svg class="s14"><use href="#save"/></svg></td><td></td></tr>
            <tr><td><div class="tn l1"><svg class="tbx" viewBox="0 0 9 9"><rect x=".5" y=".5" width="8" height="8" fill="#fff" stroke="#c8c8c8"/><path d="M2 4.500h5M4.500 2v5" stroke="#222"/></svg><svg class="s13"><use href="#chk"/></svg><svg class="s16 tic"><use href="#asm"/></svg>91B__ASM</div></td><td></td><td><svg class="s14"><use href="#save"/></svg></td><td></td></tr>
            <tr><td><div class="tn l1"><svg class="tbx" viewBox="0 0 9 9"><rect x=".5" y=".5" width="8" height="8" fill="#fff" stroke="#c8c8c8"/><path d="M2 4.500h5M4.500 2v5" stroke="#222"/></svg><svg class="s13"><use href="#chk"/></svg><svg class="s16 tic"><use href="#asm"/></svg>97B__ASM x 2</div></td><td></td><td><svg class="s14"><use href="#save"/></svg></td><td></td></tr>
            <tr><td></td><td></td><td></td><td></td></tr><tr><td></td><td></td><td></td><td></td></tr><tr><td></td><td></td><td></td><td></td></tr><tr><td></td><td></td><td></td><td></td></tr><tr><td></td><td></td><td></td><td></td></tr><tr><td></td><td></td><td></td><td></td></tr>
            <tr><td></td><td></td><td></td><td></td></tr><tr><td></td><td></td><td></td><td></td></tr><tr><td></td><td></td><td></td><td></td></tr><tr><td></td><td></td><td></td><td></td></tr><tr><td></td><td></td><td></td><td></td></tr><tr><td></td><td></td><td></td><td></td></tr>
            <tr><td></td><td></td><td></td><td></td></tr><tr><td></td><td></td><td></td><td></td></tr><tr><td></td><td></td><td></td><td></td></tr><tr><td></td><td></td><td></td><td></td></tr><tr><td></td><td></td><td></td><td></td></tr><tr><td></td><td></td><td></td><td></td></tr>
            <tr><td></td><td></td><td></td><td></td></tr><tr><td></td><td></td><td></td><td></td></tr><tr><td></td><td></td><td></td><td></td></tr><tr><td></td><td></td><td></td><td></td></tr><tr><td></td><td></td><td></td><td></td></tr><tr><td></td><td></td><td></td><td></td></tr>
            <tr><td></td><td></td><td></td><td></td></tr><tr><td></td><td></td><td></td><td></td></tr><tr><td></td><td></td><td></td><td></td></tr><tr><td></td><td></td><td></td><td></td></tr>
          </tbody>
        </table>
        <svg class="tlines" viewBox="39 208 80 180"><path d="M49.500 246v38M68.500 290v82M54 241h6M54 284h6M70 261h9M70 301h9M73 321h6M73 341h6M73 361h6M73 281h6" fill="none" stroke="#aaa" stroke-dasharray="1 1"/></svg>
      </div>
      <div class="hsb d-flex align-items-center"><svg class="s10" viewBox="0 0 10 10"><path d="M7 1L3 5l4 4" fill="none" stroke="#333" stroke-width="1.500"/></svg><i></i><svg class="s10 ms-auto me-1" viewBox="0 0 10 10"><path d="M3 1l4 4-4 4" fill="none" stroke="#333" stroke-width="1.500"/></svg></div>
      <div class="sash"></div>
      <div class="pfold d-flex align-items-center justify-content-between"><span>预览</span><svg class="s14" viewBox="0 0 14 10"><use href="#chvD"/></svg></div>
      <div class="pfold d-flex align-items-center justify-content-between"><span>相依性</span><svg class="s14" viewBox="0 0 14 10"><use href="#chvD"/></svg></div>
    </div>
    <div class="canv">
      <svg class="canvsvg" viewBox="364 180 1557 838">
        <svg x="880" y="450" width="660" height="460" viewBox="0 0 1568 1380" preserveAspectRatio="none" class="mdl">
          <path d="M172 320L870 730L870 1270L180 880L172 868Z" fill="#68767a"/>
          <path d="M920 732L1327 552L1327 1185L1000 1312L995 1322L950 1300L930 1278L920 1285Z" fill="#7f8f94"/>
          <path d="M1000 1190L1000 1312L995 1322L950 1300L930 1278Z" fill="#6b7a7e"/>
          <path d="M870 728Q895 738 920 732L920 1285Q895 1295 870 1270Z" fill="url(#gStrip)"/>
          <path d="M1000 1302L1327 1178L1327 1188L1000 1315Z" fill="#4f5b5f"/>
          <path d="M180 880L870 1270Q895 1295 920 1285L930 1278L950 1300L995 1322L1000 1312L1327 1188L1327 552" fill="none" stroke="#333b3e" stroke-width="1.200"/>
          <path d="M172 320L172 868M870 730L870 1270M920 732L920 1285M1283 800L930 1275M1000 1190L1000 1312" fill="none" stroke="#333b3e" stroke-width="1"/>
          <path d="M175 310L630 148L1325 550L900 725Z" fill="#6c7a7e"/>
          <path d="M195 318L302 278L305 350L262 360Z" fill="#84969a"/>
          <path d="M460 232L595 175L635 165L635 290L595 255L470 288Z" fill="#76878b"/>
          <path d="M640 170L880 305L880 340L830 345L725 355L640 295Z" fill="#738488"/>
          <path d="M375 295L470 265L470 350L455 342Z" fill="#7a8a8e"/>
          <path d="M960 640L1250 575L1320 552L1285 590L980 670Z" fill="#5e6b6f"/>
          <path d="M740 400L860 350L860 450L810 440L745 430Z" fill="#76878b"/>
          <path d="M595 175V250M635 165V290M300 280V345" fill="none" stroke="#4a5559" stroke-width="1"/>
          <g fill="none" stroke="#0000f0" stroke-width="3" stroke-linecap="round">
            <path d="M305 282L990 682"/><path d="M350 295L962 650"/><path d="M470 285L1005 600"/>
            <path d="M510 230L725 355"/><path d="M800 430L1092 605"/><path d="M890 305L1255 565"/>
            <path d="M375 295L470 265"/><path d="M535 395L640 355"/><path d="M305 282L420 240"/>
          </g>
          <g fill="#fffbd8" stroke="#0000f0" stroke-width="2" stroke-linejoin="round">
            <path d="M680 375L840 325L835 345L780 365L725 398Z"/>
            <path d="M970 640L1050 605L1090 625L1180 583L1260 565L1195 600L1145 630L1075 622L985 655Z"/>
            <path d="M360 290L560 205L590 180L580 200L470 240L450 258L370 298Z"/>
          </g>
          <g fill="none" stroke="#0000f0" stroke-width="6.500" stroke-linecap="round" stroke-linejoin="round">
            <path d="M250 352L195 322Q172 308 195 298L565 158"/>
            <path d="M282 372L782 665"/>
            <path d="M815 685L880 720Q895 728 915 722L1150 632"/>
            <path d="M1200 605L1295 565Q1330 550 1315 542L640 150L600 168"/>
          </g>
          <g fill="none" stroke="#fffdf0" stroke-width="2.400" stroke-linecap="round" stroke-linejoin="round">
            <path d="M250 352L195 322Q172 308 195 298L565 158"/>
            <path d="M282 372L782 665"/>
            <path d="M815 685L880 720Q895 728 915 722L1150 632"/>
          </g>
          <g fill="#e4f1f4" stroke="#323a3d" stroke-width="1">
            <ellipse cx="262" cy="372" rx="9" ry="13"/><ellipse cx="792" cy="682" rx="9" ry="13"/>
          </g>
          <g fill="#3d474a">
            <ellipse cx="526" cy="752" rx="12" ry="22"/><ellipse cx="261" cy="830" rx="12" ry="22"/><ellipse cx="791" cy="1140" rx="12" ry="22"/>
          </g>
          <g fill="#cfe2e7">
            <ellipse cx="529" cy="755" rx="8" ry="17"/><ellipse cx="264" cy="833" rx="8" ry="17"/><ellipse cx="794" cy="1143" rx="8" ry="17"/>
          </g>
          <path d="M330 238Q335 190 380 170Q440 145 497 170L480 188Q420 175 375 205Q352 222 348 240Z" fill="#3a4245"/>
          <path d="M345 200Q385 155 440 156Q480 155 497 170" fill="none" stroke="#0000f0" stroke-width="4"/>
          <path d="M362 190Q400 168 450 170" fill="none" stroke="#0000f0" stroke-width="3"/>
          <path d="M380 208L392 175M420 202L432 168M455 192L470 158" fill="none" stroke="#fffbd8" stroke-width="4"/>
          <path d="M370 205L384 172M410 205L422 168M445 198L460 158M470 195L484 162" fill="none" stroke="#0000f0" stroke-width="2"/>
          <path d="M435 190l22-3 5 18-20 6z" fill="#aab6b9" stroke="#333b3e"/>
          <ellipse cx="1205" cy="755" rx="86" ry="95" fill="#3c4447"/>
          <ellipse cx="1225" cy="740" rx="78" ry="98" fill="#9aaaad"/>
          <ellipse cx="1238" cy="735" rx="54" ry="78" fill="url(#gWheel)" stroke="#333" stroke-width="1"/>
          <path d="M1240 660L1232 810" stroke="#333" fill="none" stroke-width="1"/>
          <path d="M1275 600Q1320 680 1283 800" fill="none" stroke="#333b3e" stroke-width="1"/>
          <path d="M1140 665Q1200 640 1285 620" fill="none" stroke="#0000f0" stroke-width="6"/>
          <path d="M1142 662L1180 650L1225 648L1275 625" fill="none" stroke="#fffbd8" stroke-width="3"/>
          <path d="M1185 640L1190 660M1225 630L1230 655M1250 618L1255 640" fill="none" stroke="#0000f0" stroke-width="2.500"/>
          <path d="M28 260L595 42L1535 590L970 808Z" fill="none" stroke="#4f93cf" stroke-width="1"/>
          <path d="M527 280V395" stroke="#1a40e0" stroke-width="2"/>
          <path d="M555 410Q590 390 630 385Q600 405 555 410Z" fill="#20a030"/>
          <path d="M535 430Q590 455 612 475Q570 465 535 430Z" fill="#d02020"/>
          <g fill="none" stroke="#d2d1cc" stroke-width="3.500">
            <path d="M780 425V165" stroke-width="4.500"/>
            <path d="M780 425L905 375L960 350" stroke-width="4"/>
            <path d="M780 425L920 500" stroke-width="4"/>
            <path d="M780 218Q860 200 905 280Q930 350 885 490"/>
            <path d="M780 218Q840 280 870 340Q895 400 890 490"/>
            <path d="M910 375Q960 420 950 445Q930 470 895 480"/>
          </g>
          <polygon points="780,85 767,165 797,165" fill="#e4c35a" stroke="#b8962c" stroke-width=".5"/>
          <polygon points="1005,340 948,340 958,377" fill="#e4c35a" stroke="#b8962c" stroke-width=".5"/>
          <polygon points="965,530 926,490 908,520" fill="#e4c35a" stroke="#b8962c" stroke-width=".5"/>
          <g fill="#eec93a" stroke="#a5861a" stroke-width=".6">
            <ellipse cx="781" cy="425" rx="16" ry="20"/><ellipse cx="875" cy="245" rx="10" ry="13"/><ellipse cx="857" cy="328" rx="10" ry="13"/><ellipse cx="952" cy="433" rx="10" ry="13"/>
          </g>
        </svg>
        <g class="canvtxt" font-size="15">
          <text x="1206" y="472" fill="#2a6cf0" text-anchor="middle">Z</text>
          <text x="1308" y="566" fill="#2fa040" text-anchor="middle">Y</text>
          <text x="1289" y="638" fill="#e02a2a" text-anchor="middle">X</text>
          <text x="1115" y="541" fill="#2a6cf0" text-anchor="middle">ZC</text>
          <text x="1130" y="621" fill="#e02a2a" text-anchor="middle">XC</text>
        </g>
        <ellipse cx="1751" cy="793" rx="29" ry="29" fill="#fff" stroke="#d4d4d6" stroke-width=".6"/>
        <path d="M1722 770L1735 773Q1745 782 1750 778Q1762 768 1777 763Q1772 778 1765 788L1780 792L1762 796L1757 800L1765 817L1755 808Q1738 803 1735 790Q1733 780 1722 770Z" fill="url(#gBird)"/>
        <rect x="1372" y="986" width="143" height="23" fill="#fff" stroke="#b7cfe3"/>
        <svg x="1352" y="983" width="29" height="28"><use href="#zot"/></svg>
        <text x="1393" y="1004" text-anchor="middle" font-family="Noto Sans" font-size="20" fill="#1d74c8">A</text>
        <path d="M1422 989a9 9 0 0 1-9 16a9 9 0 0 0 9-16z" fill="#1d74c8" stroke="#1d74c8"/>
        <circle cx="1434" cy="994" r="1.800" fill="#1d74c8"/><path d="M1438 996q3 3 0 6l1-4z" fill="#1d74c8" stroke="#1d74c8"/>
        <rect x="1451" y="992" width="16" height="12" rx="1" fill="#1d74c8"/><path d="M1453 995h12M1453 998h12M1455 1001h8" stroke="#fff" stroke-dasharray="1.500 1"/>
        <circle cx="1481" cy="994" r="3.500" fill="#b6c4d4"/><path d="M1475 1006v-5q6-4 12 0v5z" fill="#b6c4d4"/>
        <path d="M1497 1006l7-8a4 4 0 0 1 4-6l-2 3 2 2 3-2a4 4 0 0 1-6 4l-6 8z" fill="#1d74c8" stroke="#1d74c8"/>
      </svg>
    </div>
  </div>
  <!-- status -->
  <div class="statusb d-flex align-items-center">
    <span>选择对象</span>
    <div class="ms-auto d-flex gap-1 align-items-center">
      <svg class="s16" viewBox="0 0 16 16"><rect width="16" height="16" fill="#dedede"/><path d="M3 13L13 3M6 13L13 7M3 9L9 3" stroke="#b8b8b8" stroke-dasharray="2 1"/></svg>
      <svg class="s16" viewBox="0 0 16 16"><path d="M1 4V1h3M12 1h3v3M15 12v3h-3M4 15H1v-3" fill="none" stroke="#888"/><rect x="4" y="3" width="8" height="10" fill="#fff" stroke="#3a4a70"/><rect x="5" y="6" width="6" height="5" fill="#7fb0e8"/></svg>
    </div>
  </div>
  <!-- taskbar -->
  <div class="taskb d-flex align-items-center">
    <div class="slot startb"><svg class="s16" viewBox="0 0 16 16"><path d="M0 2.300L6.500 1.400V7.600H0zM7.300 1.300L16 0V7.600H7.300zM0 8.400H6.500V14.600L0 13.700zM7.300 8.400H16V16L7.300 14.700z" fill="#fff"/></svg></div>
    <div class="tsearch d-flex align-items-center">
      <svg class="s18 cort" viewBox="0 0 20 20"><circle cx="10" cy="10" r="7.500" fill="none" stroke="#111" stroke-width="2.400"/></svg>
      <span>在这里输入你要搜索的内容</span>
      <svg class="s18 ms-auto" viewBox="0 0 18 18"><rect x="6" y="1" width="6" height="10" rx="3" fill="none" stroke="#333"/><path d="M3 8c0 7 12 7 12 0M9 13v4M6 17h6" fill="none" stroke="#333"/></svg>
    </div>
    <div class="tspc"></div>
    <div class="tk"><svg class="s24" viewBox="0 0 24 24"><rect x="1" y="1" width="22" height="22" fill="#fff" stroke="#888"/><path d="M5 19L19 5M5 5L19 19" stroke="#222" stroke-width="2"/><path d="M19 5l-5 1 4 4z" fill="#222"/></svg></div>
    <div class="tk run"><svg class="s24"><use href="#zot"/></svg></div>
    <div class="tk run"><svg class="s24" viewBox="0 0 24 24"><path d="M12 1c2 4 9 8 9 14a9 9 0 0 1-18 0C3 9 9 6 12 1z" fill="#3aa0ee"/><circle cx="9" cy="14" r="1" fill="#fff"/><circle cx="15" cy="14" r="1" fill="#fff"/></svg></div>
    <div class="tk run"><svg class="s24" viewBox="0 0 24 24"><path d="M10 2h6L8 22H1z" fill="#2fae5a"/><path d="M13 2h4l6 20h-7z" fill="#1d8bd0"/><path d="M8 15h8l1 3H7z" fill="#98c84a"/></svg></div>
    <div class="tk run"><svg class="s24" viewBox="0 0 24 24"><circle cx="12" cy="12" r="9" fill="none" stroke="#1ea0f0" stroke-width="4"/><path d="M12 20a4 4 0 0 1 5-5 4 4 0 0 1 6 3 3 3 0 0 1-2 5H13z" fill="#eaf4fc"/></svg></div>
    <div class="tk run"><svg class="s24" viewBox="0 0 24 24"><polygon points="1,5 12,1 23,5 23,15 1,15" fill="#c8232c"/><text x="12" y="13" text-anchor="middle" font-family="Liberation Sans" font-weight="700" font-size="10" fill="#fff">SW</text><text x="12" y="22" text-anchor="middle" font-family="Liberation Sans" font-weight="700" font-size="8" fill="#eee">2017</text></svg></div>
    <div class="tk run"><svg class="s24" viewBox="0 0 24 24"><path d="M2 4h8l2 2h10v15H2z" fill="#f2c94e"/><rect x="2" y="9" width="20" height="12" fill="#f9e08a"/><rect x="8" y="15" width="8" height="6" fill="#2a8ed8"/></svg></div>
    <div class="tk run cur"><svg class="s26" viewBox="0 0 26 26"><circle cx="12" cy="14" r="10" fill="#1a70d8"/><path d="M4 8l8 8 8-12z" fill="#d02030"/><path d="M5 20c7 3 17-3 20-12" fill="none" stroke="#f2a018" stroke-width="2.500"/><path d="M8 12c3 3 5 5 8 2" fill="none" stroke="#38b848" stroke-width="2"/></svg></div>
    <div class="d-flex align-items-center ms-auto h-100">
      <div class="slot wd36"><svg class="s18" viewBox="0 0 18 18" fill="none" stroke="#fff"><circle cx="6" cy="8" r="2.500"/><circle cx="12" cy="5" r="2.500"/><path d="M1 16c0-5 9-5 9 0M9 9c2-1 6-1 8 3"/></svg></div>
      <div class="slot wd34"><svg class="s12" viewBox="0 0 12 12"><path d="M1 9l5-5 5 5" fill="none" stroke="#fff"/></svg></div>
      <div class="slot wd18"><svg class="s16" viewBox="0 0 16 16"><path d="M1 15L7 1h3L5 15z" fill="#2fae5a"/><path d="M10 5l5 10h-5z" fill="#1d8bd0"/><circle cx="11" cy="5" r="4" fill="#f05a20"/></svg></div>
      <div class="slot wd78 tclock"><span>10:12</span><span>2018/5/26</span></div>
      <div class="slot wd32"><svg class="s24" viewBox="0 0 24 24"><path d="M3 2h16v12H8l-3 3v-3H3z" fill="#fff"/><path d="M6 5h10M6 8h10M6 11h6" stroke="#333"/><circle cx="16" cy="17" r="7" fill="#222" stroke="#666"/><text x="16" y="21" text-anchor="middle" font-family="Liberation Sans" font-weight="700" font-size="10" fill="#fff">5</text></svg></div>
      <div class="tline"></div>
    </div>
  </div>

  <!-- dialog -->
  <div class="dlg">
    <div class="dhead d-flex align-items-center">
      <svg class="s14 text-white"><use href="#gear"/></svg><span>视图截面</span>
      <svg class="s14 ms-auto" viewBox="0 0 14 14"><path d="M8 2.500A5 5 0 1 1 3 7" fill="none" stroke="#fff" stroke-width="1.800"/><path d="M9 0v5L5 2.500z" fill="#fff"/></svg>
      <svg class="s14 ms-1" viewBox="0 0 14 14"><path d="M2 2l10 10M12 2L2 12" stroke="#fff" stroke-width="1.800"/></svg>
    </div>
    <div class="dbody d-flex">
      <div class="dsecs">
        <div class="dsec pb9">
          <div class="drw h30"><div class="d-flex align-items-center"><svg class="s12 me-1" viewBox="0 0 12 12"><path d="M1 6l3.500 4L11 2" fill="none" stroke="#1fb53a" stroke-width="2.600"/></svg><span class="ms-1">指定变换</span></div><div class="ib cut"><svg class="s28"><use href="#caxis"/></svg></div></div>
        </div>
        <div class="dsec pb6">
          <div class="dshd d-flex align-items-center justify-content-between"><span>操作</span><svg class="s14" viewBox="0 0 14 10"><use href="#chvU"/></svg></div>
          <div class="drw rh34"><span>创建基准平面</span><div class="ib"><svg class="s26"><use href="#dplane"/></svg></div></div>
          <div class="drw rh34"><span>加载靠近的相交</span><div class="ib"><svg class="s28" viewBox="0 0 32 32"><rect x="1.500" y="1.500" width="29" height="29" fill="none" stroke="#000080" stroke-dasharray="2 2"/><use href="#dfold"/></svg></div></div>
          <div class="drw rh34"><span>加载所有相交</span><div class="ib"><svg class="s28" viewBox="0 0 32 32"><rect x="1" y="1" width="30" height="30" fill="none" stroke="#000080"/><use href="#dfold"/></svg></div></div>
        </div>
        <div class="dsec pb6">
          <div class="dshd d-flex align-items-center justify-content-between"><span>显示设置</span><svg class="s14" viewBox="0 0 14 10"><use href="#chvU"/></svg></div>
          <div class="drw rh26"><span class="ln25">类型</span><div class="dselx"><span class="d-flex align-items-center"><svg class="s14 me-1"><use href="#bsect"/></svg>截面</span><i class="car"></i></div></div>
          <div class="drw rh25"><label class="dchk"><input class="form-check-input" type="checkbox" checked>显示操控器</label></div>
          <div class="drw rh34"><span>在视图中移动操控器</span><div class="ib"><svg class="s28"><use href="#dmanip"/></svg></div></div>
          <div class="drw rh34"><span>将视图定向至平面</span><div class="ib"><svg class="s28"><use href="#dorient"/></svg></div></div>
          <div class="drw rh23"><label class="dchk"><input class="form-check-input" type="checkbox">显示栅格</label></div>
          <div class="drw rh34"><span>编辑栅格设置</span><div class="ib"><svg class="s28"><use href="#dgrid"/></svg></div></div>
        </div>
        <div class="dsec pb7">
          <div class="dshd d-flex align-items-center justify-content-between"><span>截断面设置</span><svg class="s14" viewBox="0 0 14 10"><use href="#chvU"/></svg></div>
          <div class="drw rh23"><label class="dchk"><input class="form-check-input" type="checkbox" checked>显示截断面</label></div>
          <div class="drw rh27"><span class="ln25">颜色选项</span><div class="dselx"><span>指定颜色</span><i class="car"></i></div></div>
          <div class="drw rsw2"><span>截断面颜色</span><div class="swx sw-g"></div></div>
          <div class="drw rh24"><label class="dchk"><input class="form-check-input" type="checkbox">显示干涉</label></div>
          <div class="drw rsw2"><span>干涉颜色</span><div class="swx sw-r"></div></div>
        </div>
        <div class="dsec pb6">
          <div class="dshd d-flex align-items-center justify-content-between"><span>截面曲线设置</span><svg class="s14" viewBox="0 0 14 10"><use href="#chvU"/></svg></div>
          <div class="drw rh22"><label class="dchk"><input class="form-check-input" type="checkbox" checked>显示截面曲线预览</label></div>
          <div class="drw rh24"><label class="dchk"><input class="form-check-input" type="checkbox">拖动时显示曲线</label></div>
          <div class="drw rh27"><span class="ln25">颜色选项</span><div class="dselx"><span>指定颜色</span><i class="car"></i></div></div>
          <div class="drw rsw"><span>颜色</span><div class="swx sw-b"></div></div>
          <div class="drw rh27"><span class="ln25">图层选项</span><div class="dselx"><span>按指定的</span><i class="car"></i></div></div>
          <div class="drw rhin"><span class="ln23">图层</span><input class="numi" type="text" value="1"></div>
          <div class="drw rh34"><span>保存截面曲线的副本</span><div class="ib"><svg class="s28"><use href="#dcopy"/></svg></div></div>
        </div>
        <div class="dsec">
          <div class="dshd cl d-flex align-items-center justify-content-between"><span>2D 查看器设置</span><svg class="s14" viewBox="0 0 14 10"><use href="#chvD"/></svg></div>
        </div>
        <div class="dsec pb6">
          <div class="dshd d-flex align-items-center justify-content-between"><span>截面系列设置</span><svg class="s14" viewBox="0 0 14 10"><use href="#chvU"/></svg></div>
          <div class="drw rhin"><span class="ln23">截面数</span><input class="numi" type="text" value="1"></div>
          <div class="drw rhin"><span class="ln23">截面间距</span><input class="numi numc" type="text" value="19.00000"></div>
          <div class="drw rh23"><label class="dchk"><input class="form-check-input" type="checkbox">反向系列</label></div>
          <div class="drw rh34"><span>预览系列</span><div class="ib"><svg class="s28"><use href="#dprev"/></svg></div></div>
        </div>
      </div>
      <div class="dscr d-flex flex-column">
        <div class="up d-flex align-items-center justify-content-center flex-none"><svg class="s10" viewBox="0 0 10 10"><path d="M1 7l4-4 4 4" fill="none" stroke="#555" stroke-width="1.800"/></svg></div>
        <div class="thumb flex-none"></div>
        <div class="dn d-flex align-items-center justify-content-center flex-none"><svg class="s10" viewBox="0 0 10 10"><path d="M1 3l4 4 4-4" fill="none" stroke="#555" stroke-width="1.800"/></svg></div>
      </div>
    </div>
    <div class="dcoll d-flex align-items-center justify-content-center"><svg class="s10" viewBox="0 0 10 6"><path d="M0 6l5-5 5 5z" fill="#222"/></svg></div>
    <div class="dfoot d-flex justify-content-end">
      <button type="button" class="btn dbtn ok">确定</button>
      <button type="button" class="btn dbtn no">取消</button>
    </div>
  </div>

  <!-- watermark -->
  <svg class="wmk" viewBox="1630 980 290 100">
    <polygon points="1673,986 1709,1006 1709,1047 1673,1067 1637,1047 1637,1006" fill="#1aa5f0" fill-opacity=".42"/>
    <polygon points="1673,1003 1689,1013 1689,1032 1673,1041 1657,1032 1657,1013" fill="#9bdcff" fill-opacity=".7" stroke="#fff" stroke-width="3" stroke-opacity=".7"/>
    <path d="M1657 1013l16 9 16-9M1673 1022v19" fill="none" stroke="#fff" stroke-opacity=".7" stroke-width="1"/>
    <path d="M1673 986c25 20 30 40 10 62M1637 1030c10-25 25-35 42-27M1709 1030c-20 22-40 25-64 15" fill="none" stroke="#fff" stroke-opacity=".5"/>
    <text x="1718" y="1024" font-family="Noto Sans,Noto Sans CJK SC,sans-serif" font-weight="700" font-size="40" letter-spacing="1.500" fill="#fff" fill-opacity=".45">3D世界网</text>
    <text x="1718" y="1054" font-family="Liberation Sans,sans-serif" font-size="15" letter-spacing="3.300" fill="#fff" fill-opacity=".42">WWW.3DSJW.COM</text>
  </svg>
</div>
<script src="https://cdn.jsdelivr.net/npm/bootstrap@5.3.0/dist/js/bootstrap.bundle.min.js"></script>
</body>
</html>
